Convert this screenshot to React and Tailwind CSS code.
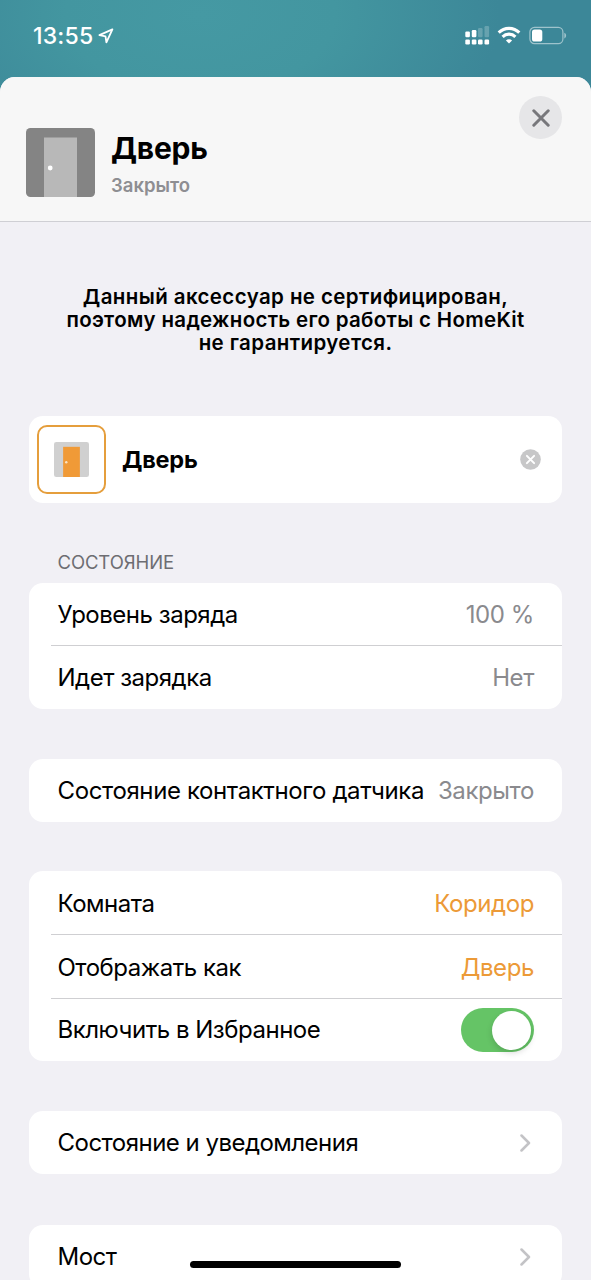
import { useState } from 'react'

function StatusBar() {
  return (
    <div className="flex h-[77px] items-start justify-between pl-[33px] pr-6 pt-[21px] text-white">
      <div className="flex items-center gap-[5px]">
        <span className="text-[23px] leading-[30px] font-medium tracking-[0.2px]">13:55</span>
        <svg width="16" height="16" viewBox="0 0 16 16" fill="none" stroke="currentColor" strokeWidth="1.8" strokeLinejoin="round">
          <path d="M14.4 1.4 1.4 7.1l6.1 1.2.9 6.1z" />
        </svg>
      </div>

      <div className="flex items-center pt-[4px]">
        {/* dual sim signal */}
        <svg width="25" height="20" viewBox="0 0 25 20" fill="currentColor">
          <rect x="0.3" y="6.6" width="4.6" height="5.6" rx="1.2" />
          <rect x="6.8" y="5" width="4.6" height="7.2" rx="1.2" />
          <rect x="13" y="3" width="4.6" height="9.2" rx="1.2" opacity=".22" />
          <rect x="19.5" y="1" width="4.6" height="11.2" rx="1.2" opacity=".22" />
          <rect x="0.3" y="14.5" width="4.6" height="5" rx="1.2" />
          <rect x="6.8" y="14.5" width="4.6" height="5" rx="1.2" />
          <rect x="13" y="14.5" width="4.6" height="5" rx="1.2" />
          <rect x="19.5" y="14.5" width="4.6" height="5" rx="1.2" />
        </svg>
        <svg className="ml-[7px]" width="24" height="18" viewBox="0 0 24 18" fill="none" stroke="currentColor" strokeWidth="3.1">
          <path d="M1.7 6.6a14.6 14.6 0 0 1 20.6 0" />
          <path d="M5.6 10.8a9.1 9.1 0 0 1 12.8 0" />
          <path d="M12 17.6 8.9 14.5a4.4 4.4 0 0 1 6.2 0z" fill="currentColor" stroke="none" />
        </svg>
        <svg className="ml-[8px]" width="38" height="19" viewBox="0 0 38 19" fill="none">
          <rect x="0.9" y="1.4" width="33" height="16.2" rx="4.6" stroke="#fff" strokeOpacity=".5" strokeWidth="1.2" />
          <rect x="3" y="3.4" width="10.3" height="12.2" rx="2.6" fill="#fff" />
          <path d="M35.3 6.8c2.4.7 2.4 4.9 0 5.6z" fill="#fff" fillOpacity=".5" />
        </svg>
      </div>
    </div>
  )
}

function DoorIcon({ size, frame, door, knob }) {
  return (
    <svg width={size} height={size} viewBox="0 0 69 69">
      <rect width="69" height="69" rx="4.5" fill={frame} />
      <rect x="18" y="9.5" width="33" height="59.5" fill={door} />
      <circle cx="24.2" cy="40" r="2.4" fill={knob} />
    </svg>
  )
}

function Card({ children, className = '' }) {
  return <div className={`overflow-hidden rounded-[14px] bg-white ${className}`}>{children}</div>
}

function Row({ label, height = 'h-[63px]', tracking = 'tracking-[-0.48px]', last = true, children }) {
  return (
    <div className="pl-[22px]">
      <div className={`flex items-center justify-between pl-[6.5px] pr-7 ${height} ${last ? '' : 'border-b border-[#cfcfd2] pt-[2px]'}`}>
        <span className={`whitespace-nowrap text-[24px] ${tracking}`}>{label}</span>
        {children}
      </div>
    </div>
  )
}

function Value({ accent, children }) {
  return (
    <span className={`whitespace-nowrap text-[24px] tracking-[-0.4px] ${accent ? 'text-[#ec9a37]' : 'text-[#8a8a8e]'}`}>
      {children}
    </span>
  )
}

function Chevron() {
  return (
    <svg className="mr-[3px]" width="11" height="18" viewBox="0 0 11 18" fill="none" stroke="#c3c3c6" strokeWidth="2.5" strokeLinecap="round" strokeLinejoin="round">
      <path d="M1.5 1.5 9 9l-7.5 7.5" />
    </svg>
  )
}

function Toggle({ on, onChange }) {
  return (
    <button
      role="switch"
      aria-checked={on}
      onClick={() => onChange(!on)}
      className={`flex h-11 w-[73px] items-center rounded-full px-[3px] ${on ? 'justify-end bg-[#65c466]' : 'bg-[#e9e9eb]'}`}
    >
      <span className="size-[39px] rounded-full bg-white shadow-[0_3px_6px_rgba(0,0,0,0.15)]" />
    </button>
  )
}

export default function App() {
  const [favorite, setFavorite] = useState(true)

  return (
    <div className="relative h-[1280px] w-full overflow-hidden bg-[radial-gradient(ellipse_300px_170px_at_200px_15px,#4599a3_0%,#4396a0_45%,#3c8798_100%)] font-[Inter,'Liberation_Sans',sans-serif] text-black">
      <StatusBar />

      <div className="h-[1203px] overflow-hidden rounded-t-[15px] bg-[#f1f0f5]">
        {/* Header */}
        <header className="flex h-[145px] border-b-[1.5px] border-[#cfcfd4] bg-[#f7f7f7] pl-[26px] pr-[29px]">
          <div className="mt-[51px]">
            <DoorIcon size={69} frame="#848484" door="#b8b8b8" knob="#fff" />
          </div>
          <div className="ml-[16px] mt-[51px] flex-1">
            <h1 className="text-[30px] leading-[40px] font-bold tracking-[-0.2px]">Дверь</h1>
            <p className="text-[18.5px] leading-[24px] mt-[5px] font-semibold text-[#8e8e92]">Закрыто</p>
          </div>
          <button className="mt-[19px] flex size-[43px] items-center justify-center rounded-full bg-[#e6e6e8]">
            <svg width="18" height="18" viewBox="0 0 18 18" stroke="#77777b" strokeWidth="3" strokeLinecap="round">
              <path d="M1.8 1.8l14.4 14.4M16.2 1.8 1.8 16.2" />
            </svg>
          </button>
        </header>

        <main className="px-[29px]">
          <p className="pt-[63px] text-center text-[20.5px] leading-[23px] font-semibold whitespace-nowrap">
            <span className="tracking-[0.4px]">Данный аксессуар не сертифицирован,</span><br />
            <span className="tracking-[0.31px]">поэтому надежность его работы с HomeKit</span><br />
            <span className="tracking-[0.4px]">не гарантируется.</span>
          </p>

          {/* Name */}
          <Card className="mt-[62px] flex h-[87px] items-center pl-2 pr-[21px]">
            <div className="flex size-[69px] items-center justify-center rounded-[10px] border-2 border-[#e59e3c]">
              <DoorIcon size={35} frame="#d0d0d0" door="#f09a37" knob="#fbe3c3" />
            </div>
            <span className="ml-[16px] flex-1 text-[23.5px] font-bold tracking-[-0.2px]">Дверь</span>
            <svg width="21" height="21" viewBox="0 0 21 21">
              <circle cx="10.5" cy="10.5" r="10.3" fill="#c7c7c8" />
              <path d="M6.9 6.9l7.2 7.2M14.1 6.9l-7.2 7.2" stroke="#fff" strokeWidth="2" strokeLinecap="round" />
            </svg>
          </Card>

          <h2 className="mt-[47px] pl-[28.5px] text-[18.5px] leading-[24px] tracking-[-0.1px] text-[#6d6d72]">СОСТОЯНИЕ</h2>
          <Card className="mt-[9px]">
            <Row label="Уровень заряда" last={false}>
              <Value>100 %</Value>
            </Row>
            <Row label="Идет зарядка">
              <Value>Нет</Value>
            </Row>
          </Card>

          <Card className="mt-[50px]">
            <Row label="Состояние контактного датчика" tracking="tracking-[-0.38px]">
              <Value>Закрыто</Value>
            </Row>
          </Card>

          <Card className="mt-[49px]">
            <Row label="Комната" height="h-[64px]" last={false}>
              <Value accent>Коридор</Value>
            </Row>
            <Row label="Отображать как" height="h-[64px]" last={false}>
              <Value accent>Дверь</Value>
            </Row>
            <Row label="Включить в Избранное" height="h-[62px]">
              <Toggle on={favorite} onChange={setFavorite} />
            </Row>
          </Card>

          <Card className="mt-[50px]">
            <Row label="Состояние и уведомления" tracking="tracking-[-0.52px]">
              <Chevron />
            </Row>
          </Card>

          <Card className="mt-[51px]">
            <Row label="Мост">
              <Chevron />
            </Row>
          </Card>
        </main>
      </div>

      {/* Home indicator */}
      <div className="absolute bottom-[12px] left-[190px] h-[7px] w-[211px] rounded-full bg-black" />
    </div>
  )
}
